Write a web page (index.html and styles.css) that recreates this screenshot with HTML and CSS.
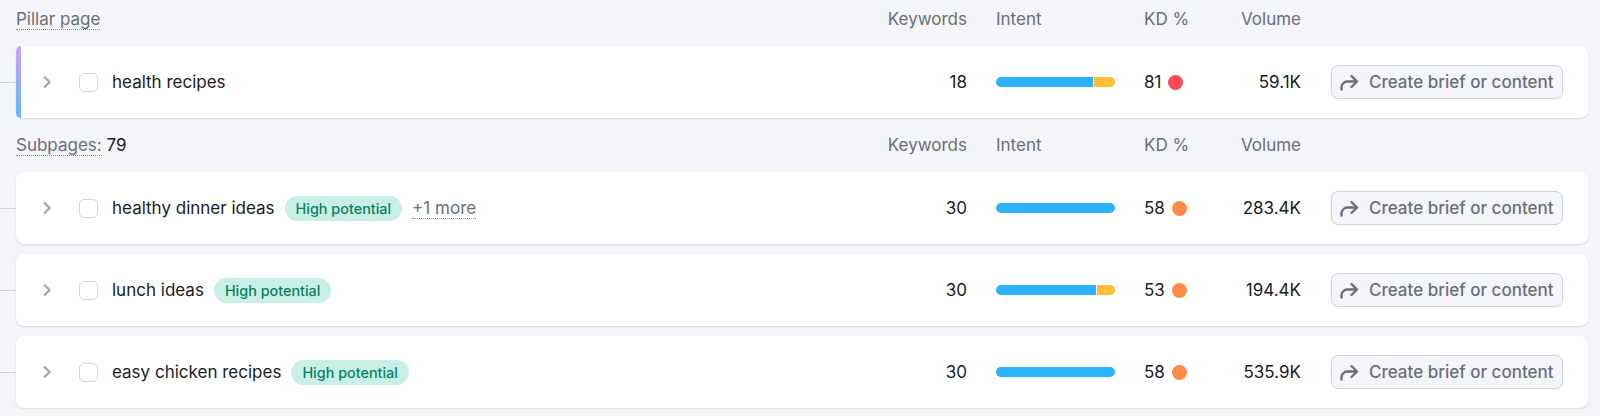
FILE: index.html
```html
<!DOCTYPE html>
<html lang="en">
<head>
<meta charset="utf-8">
<title>Pillar page</title>
<link rel="stylesheet" href="styles.css">
</head>
<body>
<main class="page">
  <div class="head grid head-first">
    <div><span class="dotted">Pillar page</span></div>
    <div class="num kw">Keywords</div>
    <div>Intent</div>
    <div class="kd-head">KD %</div>
    <div class="num">Volume</div>
    <div></div>
  </div>
  <div class="card grid pillar">
    <div class="name">
      <svg class="chev" viewBox="0 0 10 14"><path d="M2 1.500l5.500 5.500-5.500 5.500"/></svg>
      <span class="check"></span>
      <span class="title">health recipes</span>
    </div>
    <div class="num kw">18</div>
    <div class="bar"><i class="blue" style="width:81.5%"></i><i class="yellow"></i></div>
    <div class="kd">81<i class="dot red"></i></div>
    <div class="num">59.1K</div>
    <button class="btn"><svg viewBox="0 0 20 18"><path d="M2.500 16.500v-2a6 6 0 0 1 6-6h9M12.500 3l5.500 5.500-5.500 5.500"/></svg>Create brief or content</button>
  </div>
  <div class="head grid head-second">
    <div><span class="dotted">Subpages:</span> <span class="count">79</span></div>
    <div class="num kw">Keywords</div>
    <div>Intent</div>
    <div class="kd-head">KD %</div>
    <div class="num">Volume</div>
    <div></div>
  </div>
  <div class="rows">
    <div class="card grid">
      <div class="name">
        <svg class="chev" viewBox="0 0 10 14"><path d="M2 1.500l5.500 5.500-5.500 5.500"/></svg>
        <span class="check"></span>
        <span class="title">healthy dinner ideas</span>
        <span class="badge">High potential</span>
        <span class="more">+1 more</span>
      </div>
      <div class="num kw">30</div>
      <div class="bar"><i class="blue" style="width:100%"></i></div>
      <div class="kd">58<i class="dot orange"></i></div>
      <div class="num">283.4K</div>
      <button class="btn"><svg viewBox="0 0 20 18"><path d="M2.500 16.500v-2a6 6 0 0 1 6-6h9M12.500 3l5.500 5.500-5.500 5.500"/></svg>Create brief or content</button>
    </div>
    <div class="card grid">
      <div class="name">
        <svg class="chev" viewBox="0 0 10 14"><path d="M2 1.500l5.500 5.500-5.500 5.500"/></svg>
        <span class="check"></span>
        <span class="title">lunch ideas</span>
        <span class="badge">High potential</span>
      </div>
      <div class="num kw">30</div>
      <div class="bar"><i class="blue" style="width:84%"></i><i class="yellow"></i></div>
      <div class="kd">53<i class="dot orange"></i></div>
      <div class="num">194.4K</div>
      <button class="btn"><svg viewBox="0 0 20 18"><path d="M2.500 16.500v-2a6 6 0 0 1 6-6h9M12.500 3l5.500 5.500-5.500 5.500"/></svg>Create brief or content</button>
    </div>
    <div class="card grid">
      <div class="name">
        <svg class="chev" viewBox="0 0 10 14"><path d="M2 1.500l5.500 5.500-5.500 5.500"/></svg>
        <span class="check"></span>
        <span class="title">easy chicken recipes</span>
        <span class="badge">High potential</span>
      </div>
      <div class="num kw">30</div>
      <div class="bar"><i class="blue" style="width:100%"></i></div>
      <div class="kd">58<i class="dot orange"></i></div>
      <div class="num">535.9K</div>
      <button class="btn"><svg viewBox="0 0 20 18"><path d="M2.500 16.500v-2a6 6 0 0 1 6-6h9M12.500 3l5.500 5.500-5.500 5.500"/></svg>Create brief or content</button>
    </div>
  </div>
</main>
</body>
</html>
```
FILE: styles.css
```css
* { box-sizing: border-box; }
html, body { margin: 0; height: 100%; }
body {
  background: #f4f5f9;
  font-family: Inter, "Liberation Sans", sans-serif;
  font-size: 17px;
  color: #191b23;
  overflow: hidden;
}
.page { padding: 0 12px 0 16px; }
.grid {
  display: grid;
  grid-template-columns: 1fr 80px 119px 46px 80px 232px;
  column-gap: 30px;
  align-items: center;
}
.head { color: #6c6e79; padding-right: 25px; }
.head-first { height: 46px; padding-bottom: 8px; }
.head-second { height: 54px; }
.dotted { border-bottom: 1px dotted #8b8d96; display: inline-block; line-height: 20px; }
.count { color: #191b23; }
.num { text-align: right; }
.kw { margin-right: -1px; }
.kd-head { margin-left: -1px; }
.card {
  position: relative;
  height: 72px;
  background: #fff;
  border-radius: 8px;
  box-shadow: 0 1px 2px rgba(25, 27, 35, 0.14);
  padding: 0 25px 0 26px;
}
.card::after {
  content: "";
  position: absolute;
  left: -16px;
  top: 50%;
  width: 16px;
  height: 1px;
  background: #d0d2d9;
}
.pillar::before {
  content: "";
  position: absolute;
  left: 0;
  top: 0;
  bottom: 0;
  width: 5px;
  border-radius: 8px 0 0 8px;
  background: linear-gradient(180deg, #c9a2f5, #5fb8ff);
}
.rows { display: flex; flex-direction: column; gap: 10px; }
.name { display: flex; align-items: center; min-width: 0; }
.chev { width: 10px; height: 14px; margin-right: 27px; flex: none; }
.chev path { fill: none; stroke: #a4a6b0; stroke-width: 2.200; }
.check {
  width: 19px;
  height: 19px;
  border: 1px solid #d4d6dc;
  border-radius: 5px;
  background: #fff;
  margin-right: 14px;
  flex: none;
}
.title { white-space: nowrap; }
.badge {
  margin-left: 10px;
  height: 25px;
  line-height: 25px;
  padding: 0 11px;
  border-radius: 13px;
  background: #c9f0e6;
  color: #0a8062;
  font-size: 14.400px;
  font-weight: 500;
  white-space: nowrap;
}
.more {
  margin-left: 10px;
  color: #6c6e79;
  border-bottom: 1px dotted #8b8d96;
  line-height: 20px;
  white-space: nowrap;
}
.bar {
  display: flex;
  gap: 1px;
  height: 10px;
  border-radius: 5px;
  overflow: hidden;
}
.bar i { display: block; height: 100%; }
.blue { background: #2bb3ff; flex: none; }
.yellow { background: #ffc038; flex: 1; }
.kd { display: flex; align-items: center; gap: 7px; white-space: nowrap; margin-left: -1px; }
.dot { width: 15px; height: 15px; border-radius: 50%; flex: none; }
.red { background: #ff4953; }
.orange { background: #ff8c43; }
.btn {
  display: flex;
  align-items: center;
  gap: 10px;
  height: 34px;
  width: 232px;
  padding: 0 7px;
  border: 1px solid #d0d2d9;
  border-radius: 7px;
  background: #f4f5f9;
  color: #6c6e79;
  font: 500 17px Inter, "Liberation Sans", sans-serif;
  white-space: nowrap;
}
.btn svg { width: 20px; height: 18px; flex: none; }
.btn path { fill: none; stroke: #6c6e79; stroke-width: 2.400; stroke-linecap: round; stroke-linejoin: round; }
```
